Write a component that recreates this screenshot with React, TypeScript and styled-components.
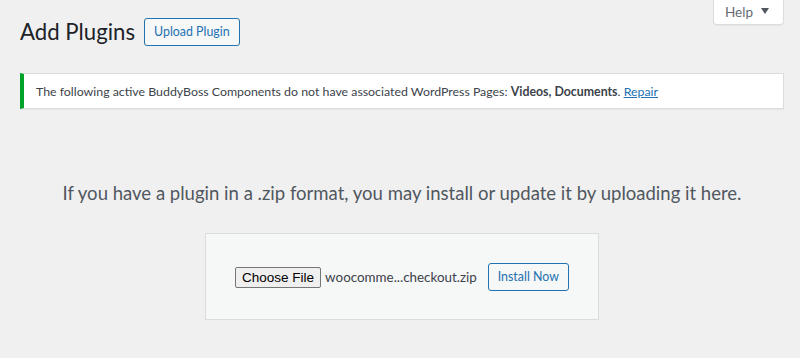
import styled, { createGlobalStyle } from "styled-components";

const GlobalStyle = createGlobalStyle`
    html, body {
        margin: 0;
        padding: 0;
        background: #f0f0f1;
    }
    body {
        font-family: Lato, "Noto Sans", sans-serif;
        color: #3c434a;
        font-size: 13px;
    }
`;

const Wrap = styled.div`
    padding: 0 16px 0 20px;
    height: 358px;
    overflow: hidden;
`;

const HelpTab = styled.button`
    float: right;
    height: 26px;
    padding: 0 14px 0 11px;
    margin-top: -1px;
    border: 1px solid #dcdcde;
    border-top: none;
    border-radius: 0 0 4px 4px;
    background: #fff;
    box-shadow: 0 1px 1px rgba(0, 0, 0, 0.04);
    color: #646970;
    font-family: inherit;
    font-size: 13.5px;
    display: flex;
    align-items: center;
    gap: 8px;
`;

const Caret = styled.span`
    width: 0;
    height: 0;
    border-left: 4px solid transparent;
    border-right: 4px solid transparent;
    border-top: 6px solid #50575e;
    margin-top: -2px;
`;

const Header = styled.div`
    display: flex;
    align-items: center;
    gap: 9px;
    padding-top: 17px;
`;

const Title = styled.h1`
    margin: 0;
    font-size: 22.2px;
    font-weight: 400;
    line-height: 30px;
    color: #1d2327;
`;

const OutlineButton = styled.button`
    height: 28px;
    padding: 0 9px;
    border: 1px solid #2271b1;
    border-radius: 3px;
    background: #f6f7f7;
    color: #2271b1;
    font-family: inherit;
    font-size: 12.4px;
    line-height: 26px;
    white-space: nowrap;
`;

const Notice = styled.div`
    margin-top: 26px;
    background: #fff;
    border: 1px solid #dcdcde;
    border-left: 4px solid #00a32a;
    box-shadow: 0 1px 1px rgba(0, 0, 0, 0.04);
    padding: 0 12px;
    height: 34px;
    display: flex;
    align-items: center;
`;

const NoticeText = styled.p`
    margin: 0;
    font-size: 12.35px;
    color: #3c434a;

    b {
        font-weight: 700;
    }

    a {
        color: #2271b1;
        text-decoration: underline;
    }
`;

const UploadSection = styled.div`
    display: flex;
    flex-direction: column;
    align-items: center;
    padding-top: 72px;
`;

const Help = styled.p`
    margin: 0;
    font-size: 18.55px;
    line-height: 24px;
    color: #50575e;
`;

const UploadForm = styled.form`
    margin-top: 28px;
    padding: 29px 29px 28px;
    background: #f6f7f7;
    border: 1px solid #dcdcde;
    display: flex;
    align-items: center;
`;

const ChooseButton = styled.span`
    height: 21px;
    padding: 0 6px;
    border: 1px solid #767676;
    border-radius: 2px;
    background: #efefef;
    color: #000;
    font-family: "Liberation Sans", Arial, sans-serif;
    font-size: 13.5px;
    line-height: 19px;
    box-sizing: border-box;
    display: inline-flex;
    align-items: center;
`;

const FileName = styled.span`
    margin-left: 4px;
    margin-right: 11px;
    font-size: 13.4px;
    color: #3c434a;
`;

export default function App() {
    return (
        <>
            <GlobalStyle />
            <Wrap>
                <HelpTab type="button">
                    Help <Caret />
                </HelpTab>
                <Header>
                    <Title>Add Plugins</Title>
                    <OutlineButton type="button">Upload Plugin</OutlineButton>
                </Header>

                <Notice>
                    <NoticeText>
                        The following active BuddyBoss Components do not have associated WordPress Pages:{" "}
                        <b>Videos, Documents</b>. <a href="#">Repair</a>
                    </NoticeText>
                </Notice>

                <UploadSection>
                    <Help>If you have a plugin in a .zip format, you may install or update it by uploading it here.</Help>
                    <UploadForm onSubmit={(e) => e.preventDefault()}>
                        <ChooseButton>Choose File</ChooseButton>
                        <FileName>woocomme...checkout.zip</FileName>
                        <OutlineButton type="submit">Install Now</OutlineButton>
                    </UploadForm>
                </UploadSection>
            </Wrap>
        </>
    );
}
